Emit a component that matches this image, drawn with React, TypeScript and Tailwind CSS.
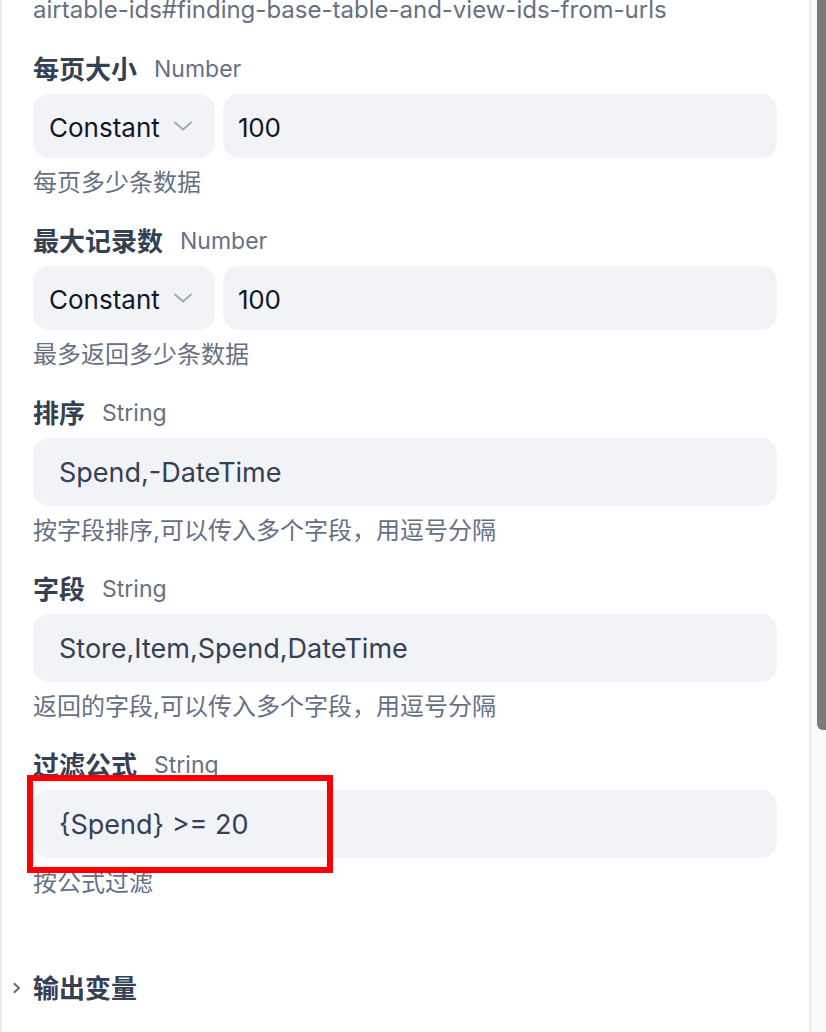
import React from "react";

const font = { fontFamily: 'Inter, "Noto Sans CJK SC", sans-serif' };

function Label({ name, type }: { name: string; type: string }) {
  return (
    <div className="h-[36px] flex items-center gap-[17px]">
      <span className="text-[26px] font-bold text-[#344054]">{name}</span>
      <span className="text-[23px] text-[#667085]">{type}</span>
    </div>
  );
}

function Helper({ text }: { text: string }) {
  return <div className="mt-[7px] h-[36px] flex items-center text-[24px] text-[#667085]">{text}</div>;
}

function Chevron() {
  return (
    <svg width="18" height="10" viewBox="0 0 18 10" fill="none">
      <path d="M1 1.5L9 8.5L17 1.5" stroke="#a3a9b5" strokeWidth="2" strokeLinecap="round" strokeLinejoin="round" />
    </svg>
  );
}

function NumberField({ name, value, help }: { name: string; value: string; help: string }) {
  return (
    <div>
      <Label name={name} type="Number" />
      <div className="mt-[7px] flex gap-[8px] h-[64px]">
        <div className="w-[182px] rounded-[16px] bg-[#f2f3f7] flex items-center justify-between pl-[16px] pr-[23px]">
          <span className="text-[26px] text-[#101828] pt-[3px]">Constant</span>
          <Chevron />
        </div>
        <div className="flex-1 rounded-[16px] bg-[#f2f3f7] flex items-center pl-[15px]">
          <span className="text-[26px] text-[#101828] tracking-[-0.3px] pt-[3px]">{value}</span>
        </div>
      </div>
      <Helper text={help} />
    </div>
  );
}

function StringField({ name, value, help }: { name: string; value: string; help: string }) {
  return (
    <div>
      <Label name={name} type="String" />
      <div className="mt-[7px] h-[68px] rounded-[16px] bg-[#f2f3f7] flex items-center pl-[26px]">
        <span className="text-[27px] text-[#344054] pt-[3px]">{value}</span>
      </div>
      <Helper text={help} />
    </div>
  );
}

export default function App() {
  return (
    <div className="w-[826px] h-[1032px] overflow-hidden flex bg-white relative" style={font}>
      <div className="w-[811px] h-full border-l-2 border-r-2 border-[#ebebeb] pl-[31px] pr-[32px] flex flex-col">
        <div className="-mt-[8px] h-[36px] flex items-center text-[24px] text-[#667085] whitespace-nowrap">
          airtable-ids#finding-base-table-and-view-ids-from-urls
        </div>
        <div className="mt-[23px] flex flex-col gap-[22px]">
          <NumberField name="每页大小" value="100" help="每页多少条数据" />
          <NumberField name="最大记录数" value="100" help="最多返回多少条数据" />
          <StringField name="排序" value="Spend,-DateTime" help="按字段排序,可以传入多个字段，用逗号分隔" />
          <StringField name="字段" value="Store,Item,Spend,DateTime" help="返回的字段,可以传入多个字段，用逗号分隔" />
          <StringField name="过滤公式" value="{Spend} >= 20" help="按公式过滤" />
        </div>
        <div className="mt-[69px] -ml-[21px] h-[36px] flex items-center gap-[11px]">
          <svg width="10" height="12" viewBox="0 0 10 12" fill="none">
            <path d="M2.5 2L7 6L2.5 10" stroke="#667085" strokeWidth="2.2" strokeLinecap="round" strokeLinejoin="round" />
          </svg>
          <span className="text-[26px] font-bold text-[#344054]">输出变量</span>
        </div>
      </div>
      <div className="flex-1 h-full bg-[#f9f9f9] pl-[6px]">
        <div className="h-[730px] bg-[#7a7a7a] rounded-bl-[6px]" />
      </div>
      <div className="absolute left-[27px] top-[775px] w-[306px] h-[98px] border-[6px] border-[#ff0000]" />
    </div>
  );
}
